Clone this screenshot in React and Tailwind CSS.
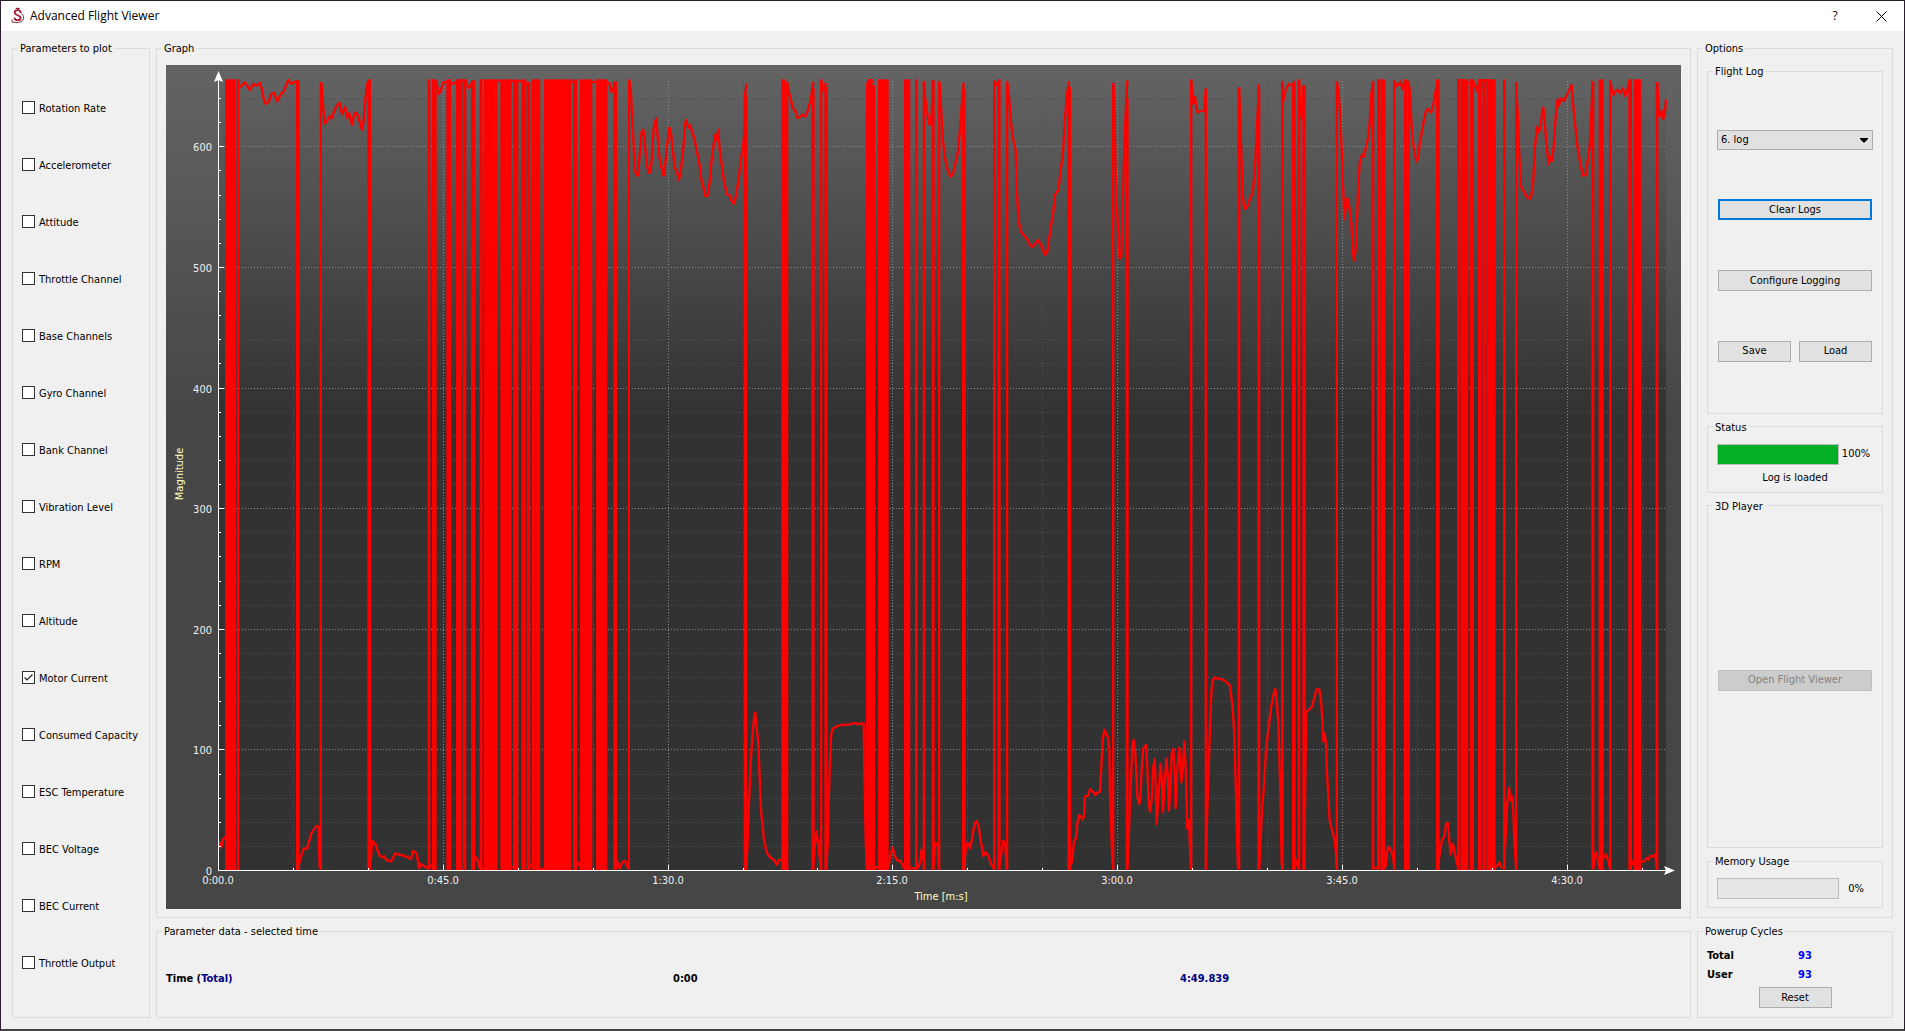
import React, { useState } from "react";

const PARAMETERS = [
  "Rotation Rate",
  "Accelerometer",
  "Attitude",
  "Throttle Channel",
  "Base Channels",
  "Gyro Channel",
  "Bank Channel",
  "Vibration Level",
  "RPM",
  "Altitude",
  "Motor Current",
  "Consumed Capacity",
  "ESC Temperature",
  "BEC Voltage",
  "BEC Current",
  "Throttle Output",
];

const X_AXIS = 218;
const Y_AXIS = 870;
const PLOT_RIGHT = 1666;
const PLOT_TOP = 80;
const yOf = (value) => Math.round(Y_AXIS - value * 1.2062);
const xOf = (step) => Math.round(X_AXIS + step * 74.93);

const Y_STEPS = Array.from({ length: 32 }, (_, i) => (i + 1) * 20);
const X_STEPS = Array.from({ length: 19 }, (_, i) => i + 1);
const X_LABELS = ["0:00.0", "0:45.0", "1:30.0", "2:15.0", "3:00.0", "3:45.0", "4:30.0"];

const SLICES = [
  {
    x: 210,
    spikes: [
      [45, 79], [81, 88], [258, 269, 61], [329, 336, 66], [472, 483], [653, 661], [666, 680],
      [709, 723], [738, 757], [759, 769], [783, 795, 61], [809, 818], [822, 857], [858, 863],
      [871, 905], [909, 925], [934, 949], [951, 961, 66], [965, 976], [977, 991], [1002, 1084],
      [1089, 1101], [1110, 1147], [1158, 1192], [1210, 1221, 64], [1254, 1260],
    ],
    high: [
      "84,60 86,78 93,80 104,67 110,75 120,90 130,72 140,77 150,69 155,85 163,125 168,132 177,124 184,102 193,99 201,124 207,114 214,101 221,95 228,76 235,60 243,71 252,66 264,66",
      "334,66 337,110 341,160 345,190 353,180 360,168 365,175 370,160 377,143 388,128 396,163 405,140 411,175 418,160 426,195 431,170 437,157 443,165 449,185 456,210 460,190 465,130 471,75 476,61",
      "678,62 684,90 686,102 692,95 700,67 710,66 716,61",
      "721,70 730,71 741,66 755,61 767,62 770,75 777,84 782,75 788,64",
      "855,63 875,63",
      "903,63 940,63",
      "947,66 954,80 957,68",
      "970,63 982,63",
      "1082,66 1096,66",
      "1145,66 1162,66",
      "1190,66 1199,72 1204,95 1209,92 1214,68",
    ],
    low: [
      "27,568 29,547 35,560 38,540 46,530",
      "264,628 270,600 276,580 281,565 291,567 297,545 304,520 312,507 321,497 326,502 329,625",
      "478,625 483,590 487,543 497,553 504,575 510,588 517,592 523,588 529,600 544,604 556,580 568,584 585,588 603,597 609,573 620,580 625,610 628,625 632,612 645,620 655,625 665,615",
      "788,625 792,590 799,592 804,605 808,622 822,625",
      "905,622 912,622",
      "957,625 963,612",
      "989,627 1004,627",
      "1095,625 1101,605 1106,612 1110,622",
      "1216,625 1220,600 1226,620 1230,625 1236,608 1245,602 1250,615 1256,627",
    ],
  },
  {
    x: 620,
    spikes: [
      [372, 382, 105], [484, 496], [497, 505, 64], [574, 584, 84], [600, 607], [613, 623, 80],
      [738, 765, 75], [744, 758], [774, 806], [852, 871], [885, 893], [908, 916, 64],
      [935, 944, 61], [954, 961, 64], [1026, 1037, 86], [1119, 1127, 61], [1132, 1142],
      [1158, 1165, 64], [1342, 1353, 80], [1476, 1483, 70], [1517, 1526, 115],
    ],
    high: [
      "28,60 33,98 36,165 40,235 44,330 48,340 53,348 57,310 61,260 65,215 70,209 75,250 80,310 86,338 91,338 96,290 100,215 104,187 109,175 112,220 118,290 124,320 131,347 136,310 142,250 148,202 153,220 158,265 164,325 170,332 177,360 184,320 190,265 195,190 199,180 205,203 211,197 218,220 224,242 230,270 238,310 244,360 251,385 255,407 262,408 268,375 276,290 285,225 290,240 295,210 299,270 306,320 313,370 321,402 330,408 337,428 343,430 350,395 358,340 363,295 369,260 373,220 375,105 380,70",
      "500,65 505,90 512,115 517,140 527,155 532,174 540,171 548,164 556,170 564,150 573,115 580,66",
      "604,60 607,90 611,92 618,68",
      "740,75 746,61 755,61 762,66",
      "911,65 915,110 921,155 927,193 933,193 937,120 939,62",
      "958,65 963,140 968,235 974,290 983,330 991,350 998,345 1006,310 1014,275 1019,220 1024,150 1031,68",
      "1122,64 1128,75 1137,62",
      "1161,65 1167,110 1173,190 1180,240 1187,270 1190,380 1193,440 1196,485 1203,515 1212,527 1220,535 1230,555 1237,561 1246,552 1253,540 1262,552 1269,570 1275,585 1282,575 1287,540 1294,490 1300,455 1305,405 1315,390 1321,340 1329,280 1334,190 1340,110 1347,64",
      "1480,70 1483,130 1487,340 1491,440 1496,560 1499,597 1504,590 1507,480 1512,300 1517,160 1522,62",
    ],
    low: [],
  },
  {
    x: 700,
    spikes: [],
    high: [],
    low: [
      "138,625 142,570 147,430 152,310 157,230 162,175 166,157 169,200 174,240 177,300 180,380 183,450 188,500 192,540 197,565 203,582 212,594 223,600 230,615 237,600 244,600",
      "340,608 344,560 349,515 353,540 358,580 362,620",
      "378,622 383,560 386,430 390,300 394,220 398,206 408,200 423,195 448,193 460,189 475,192 491,190 492,250 494,370 497,540 500,625",
      "525,622 535,622",
      "565,625 570,590 578,563 585,590 592,602 601,602 612,625",
      "627,622 645,627 655,622 661,605 664,570 668,600",
      "700,618 703,590 706,548 713,552 716,620",
      "792,625 796,580 801,550 805,550 811,565 818,525 824,490 830,483 836,500 842,540 850,588 857,576 866,590 873,610 881,625",
      "896,625 904,580 910,542 916,560 920,625",
    ],
  },
  {
    x: 1000,
    spikes: [
      [570, 577], [614, 621, 86], [713, 721, 82], [772, 781, 86], [843, 851, 64], [876, 887, 70],
      [893, 901], [907, 917, 76],
    ],
    high: [
      "573,60 576,90 580,130 585,110 589,145 593,157 603,153 613,152 618,86",
      "717,82 721,200 725,310 728,400 732,440 736,447 744,435 752,410 758,400 764,340 768,260 773,160 777,73",
      "847,65 850,122 857,90 866,72 880,76 883,62",
      "897,62 901,150 907,180 909,110 912,76",
    ],
    low: [],
  },
  {
    x: 1040,
    spikes: [],
    high: [],
    low: [
      "87,625 96,605 102,545 108,535 112,490 118,465 128,478 132,470 135,410 144,407 150,387 159,395 167,405 173,397 180,395 184,320 188,240 193,209 204,232 208,270 210,400 213,480 216,580 219,620",
      "260,620 264,590 268,480 272,380 277,265 281,240 286,280 289,340 292,410 298,432 302,400 306,310 310,266 318,255 322,320 326,425 330,455 335,420 340,320 344,298 347,370 350,492 355,420 361,312 365,350 369,456 374,370 379,296 383,340 387,452 392,370 395,280 400,266 404,330 407,445 411,340 418,263 424,367 429,320 433,245 437,320 440,430 441,505 447,480 452,610",
      "498,605 501,480 506,330 510,200 514,100 518,62 524,52 534,56 546,58 558,65 569,76 573,100 578,145 582,210 585,300 588,400 590,500 594,625",
      "657,625 660,580 666,450 672,380 678,270 685,210 693,145 700,105 706,87 711,130 715,190 718,290 721,400 725,615",
      "762,620 768,600 773,622",
      "791,605 795,440 797,280 799,155 806,150 816,140 824,110 830,88 838,88 843,120 847,180 850,245 854,220 858,250 861,340 865,410 869,480 876,510 884,540 888,580 891,627",
    ],
  },
  {
    x: 1320,
    spikes: [
      [47, 54, 64], [155, 163, 64], [171, 182], [183, 196], [219, 226, 61], [252, 262],
      [263, 270, 64], [348, 359], [411, 419], [421, 445], [450, 462], [474, 487], [488, 499],
      [500, 527], [549, 557], [585, 592, 66], [814, 823, 64], [836, 851], [867, 874, 61],
      [925, 936], [941, 963], [1007, 1015, 66],
    ],
    high: [
      "51,65 57,110 62,190 66,300 70,400 73,478 80,415 85,420 89,450 94,490 98,565 102,602 107,570 111,480 115,370 120,300 127,283 132,290 137,265 144,235 149,190 153,110 159,65",
      "223,62 230,78 237,72 242,65 247,87 254,66 266,66 270,100 274,185 279,245 285,285 290,305 294,295 300,245 306,213 312,180 317,155 324,146 333,158 339,140 345,105 353,61",
      "415,61 430,61",
      "443,70 455,66 462,66 470,93 476,66",
      "480,61 510,61",
      "588,68 594,180 598,290 603,380 612,395 622,413 632,415 638,385 641,340 645,260 651,200 657,217 662,195 666,160 670,143 674,180 678,240 686,313 691,290 696,303 701,260 707,170 713,118 716,138 723,115 732,122 742,103 755,75 759,130 766,200 773,265 781,310 789,347 797,345 803,305 809,260 813,180 818,65",
      "870,62 876,90 881,105 888,92 893,90 900,100 909,85 915,108 922,92 930,62",
      "1011,66 1015,120 1018,170 1026,152 1030,177 1035,155 1038,118",
    ],
    low: [
      "163,623 172,623",
      "197,620 202,575 205,560 213,570 219,590 223,625",
      "354,620 360,575 366,540 373,530 378,490 383,488 387,530 392,583 399,552 404,575 411,610 415,625",
      "527,620 532,618 538,607 545,625",
      "553,600 558,510 562,430 567,383 572,420 577,410 580,460 583,540 588,620",
      "820,625 824,590 828,577 833,595 837,622 842,615 852,590 858,583 864,600 870,625",
      "930,622 935,602 940,615",
      "963,605 972,605 980,594 986,600 990,588 998,590 1006,583 1010,625",
    ],
  },
];

function Group({ title, className, children }) {
  return (
    <fieldset className={`min-w-0 border border-[#dcdcdc] px-[9px] ${className}`}>
      <legend className="-ml-1 px-[2px] pt-[2px] leading-[14px]">{title}</legend>
      {children}
    </fieldset>
  );
}

const PLAIN_FRAME = "border border-[#adadad]";
const DEFAULT_FRAME = "border-2 border-[#0078d7]";

function PushButton({ className = "", isDefault = false, children, ...rest }) {
  return (
    <button
      type="button"
      className={`flex h-[21px] items-center justify-center bg-[#e1e1e1] leading-4 disabled:border-[#bfbfbf] disabled:bg-[#cccccc] disabled:text-[#838383] ${isDefault ? DEFAULT_FRAME : PLAIN_FRAME} ${className}`}
      {...rest}
    >
      {children}
    </button>
  );
}

function Meter({ value, label }) {
  return (
    <div className="flex items-center">
      <div
        role="progressbar"
        aria-label={label}
        aria-valuenow={value}
        aria-valuemin={0}
        aria-valuemax={100}
        className="h-[21px] flex-1 border border-[#bcbcbc] bg-[#e6e6e6]"
      >
        <div className="h-full bg-[#06b025]" style={{ width: `${value}%` }} />
      </div>
      <span className="w-[34px] text-center leading-4">{value}%</span>
    </div>
  );
}

function AppIcon() {
  return (
    <svg width="14" height="18" viewBox="0 0 14 18" fill="none" aria-hidden="true">
      <path d="M9.800 6C9.600 4 8.300 3.200 6.800 3.200C5 3.200 3.700 4.100 3.700 5.600C3.700 8.700 9.600 7.800 9.600 10.900C9.600 12.400 8.400 13.200 6.700 13.200C4.900 13.200 3.700 12.400 3.400 10.600" stroke="#a51c36" strokeWidth="1.800" />
      <path d="M6.700 0.500V3M4.700 1.500H8.700" stroke="#8d2438" strokeWidth="1" />
      <path d="M10.500 6.500C12.500 8 13.200 10.500 12 13C10.800 15 8.500 15.600 5 15.400L1 15.200C0.600 14 1 13 2 12.600" stroke="#7d2f40" strokeWidth="1" />
    </svg>
  );
}

function Grid() {
  return (
    <g shapeRendering="crispEdges" strokeWidth="1" strokeDasharray="1 2">
      {Y_STEPS.map((v) => (
        <line key={v} x1={X_AXIS} x2={PLOT_RIGHT} y1={yOf(v) + 0.5} y2={yOf(v) + 0.5} stroke={v % 100 ? "#505050" : "#8c8c8c"} />
      ))}
      {X_STEPS.map((s) => (
        <line key={s} x1={xOf(s) + 0.5} x2={xOf(s) + 0.5} y1={PLOT_TOP + 1} y2={Y_AXIS} stroke={s % 3 ? "#505050" : "#8c8c8c"} />
      ))}
    </g>
  );
}

function Axes() {
  return (
    <>
      <g shapeRendering="crispEdges" fill="#ffffff">
        <rect x={X_AXIS} y={PLOT_TOP} width="1" height={Y_AXIS - PLOT_TOP + 1} />
        <rect x={X_AXIS} y={Y_AXIS} width={PLOT_RIGHT - X_AXIS} height="1" />
        {Y_STEPS.map((v) => (
          <rect key={v} x={X_AXIS} y={yOf(v)} width={v % 100 ? 3 : 6} height="1" />
        ))}
        {X_STEPS.map((s) => (
          <rect key={s} x={xOf(s)} y={Y_AXIS - (s % 3 ? 2 : 5)} width="1" height={s % 3 ? 2 : 5} />
        ))}
      </g>
      <path d="M218.500 71L223 82L218.500 80L214 82Z" fill="#ffffff" />
      <path d="M1675 870.500L1664 875L1666 870.500L1664 866Z" fill="#ffffff" />
    </>
  );
}

function Trace() {
  return (
    <g fill="none" stroke="#ff0000" strokeWidth="7" strokeLinejoin="round">
      {SLICES.map((slice) => (
        <g key={slice.x}>
          <g transform={`translate(${slice.x} 60) scale(0.33333)`}>
            {slice.spikes.map(([from, to, top = 58]) => (
              <rect key={from} x={from} y={top} width={to - from} height={2430 - top} fill="#ff0000" stroke="none" />
            ))}
            {slice.high.map((points) => (
              <polyline key={points} points={points} />
            ))}
          </g>
          <g transform={`translate(${slice.x} 660) scale(0.33333)`}>
            {slice.low.map((points) => (
              <polyline key={points} points={points} />
            ))}
          </g>
        </g>
      ))}
    </g>
  );
}

function Chart() {
  return (
    <div className="flex min-h-0 flex-1 bg-[linear-gradient(#646464,#464646_350px)]">
      <svg viewBox="166 65 1515 844" className="min-h-0 w-full flex-1" role="img" aria-label="Motor current over time">
        <defs>
          <linearGradient id="plot" gradientUnits="userSpaceOnUse" x1="0" y1="65" x2="0" y2="415">
            <stop offset="0" stopColor="#646464" />
            <stop offset="1" stopColor="#323232" />
          </linearGradient>
        </defs>
        <rect x={X_AXIS} y={PLOT_TOP} width={PLOT_RIGHT - X_AXIS} height={Y_AXIS - PLOT_TOP} fill="url(#plot)" />
        <Grid />
        <Trace />
        <Axes />
        <g fill="#f0f0f0" fontSize="11">
          {[0, 100, 200, 300, 400, 500, 600].map((v) => (
            <text key={v} x="212" y={yOf(v) + 5} textAnchor="end">{v}</text>
          ))}
          {X_LABELS.map((label, i) => (
            <text key={label} x={xOf(i * 3)} y="884" textAnchor="middle">{label}</text>
          ))}
        </g>
        <g fill="#ffffbe" fontSize="11" textAnchor="middle">
          <text x="941" y="900">Time [m:s]</text>
          <text transform="translate(183 474) rotate(-90)">Magnitude</text>
        </g>
      </svg>
    </div>
  );
}

function ParameterBox({ name, checked, onToggle }) {
  return (
    <label className="flex flex-1 items-center gap-1">
      <span className="relative flex size-[13px]">
        <input
          type="checkbox"
          checked={checked}
          onChange={onToggle}
          className="size-[13px] appearance-none border border-[#333333] bg-white"
        />
        {checked && (
          <svg viewBox="0 0 13 13" className="pointer-events-none absolute inset-0 size-[13px]" fill="none" aria-hidden="true">
            <path d="M2.500 6.500L5 9L10.500 3.500" stroke="#222222" strokeWidth="1.200" />
          </svg>
        )}
      </span>
      <span className="whitespace-nowrap pt-[2px] leading-[14px]">{name}</span>
    </label>
  );
}

export default function App() {
  const [selected, setSelected] = useState(["Motor Current"]);
  const toggle = (name) =>
    setSelected((now) => (now.includes(name) ? now.filter((n) => n !== name) : [...now, name]));

  return (
    <div className="flex h-screen min-h-[760px] flex-col border border-b-2 border-[#2a1d2c] border-b-[#444444] bg-[#f0f0f0] font-['DejaVu_Sans_Condensed','DejaVu_Sans',sans-serif] text-[11px] text-black">
      <header className="flex h-[30px] items-center bg-white pl-[10px] font-['Open_Sans',sans-serif] text-xs">
        <AppIcon />
        <h1 className="ml-[5px] flex-1 leading-4">Advanced Flight Viewer</h1>
        <button type="button" aria-label="Help" className="h-full w-[46px]">?</button>
        <button type="button" aria-label="Close" className="flex h-full w-[46px] items-center justify-center">
          <svg width="11" height="11" viewBox="0 0 11 11" fill="none" aria-hidden="true">
            <path d="M0.500 0.500L10.500 10.500M10.500 0.500L0.500 10.500" stroke="#000000" strokeWidth="1" />
          </svg>
        </button>
      </header>

      <main className="flex min-h-0 flex-1 gap-[6px] px-[11px] pt-[9px] pb-[11px]">
        <Group title="Parameters to plot" className="flex w-[138px] flex-col pt-[23px] pb-[26px]">
          {PARAMETERS.map((name) => (
            <ParameterBox key={name} name={name} checked={selected.includes(name)} onToggle={() => toggle(name)} />
          ))}
        </Group>

        <div className="flex min-w-0 flex-1 flex-col gap-[5px]">
          <Group title="Graph" className="flex min-h-0 flex-1 flex-col pt-[9px] pb-2">
            <Chart />
          </Group>
          <Group title="Parameter data - selected time" className="h-[95px] pt-8">
            <div className="grid grid-cols-3 gap-[6px] font-bold leading-4">
              <span>
                Time (<span className="text-[#000080]">Total)</span>
              </span>
              <span>0:00</span>
              <span className="text-[#000080]">4:49.839</span>
            </div>
          </Group>
        </div>

        <div className="flex w-[196px] flex-col gap-[5px]">
          <Group title="Options" className="flex min-h-0 flex-1 flex-col gap-[5px] pt-[7px] pb-[9px]">
            <Group title="Flight Log" className="flex flex-1 flex-col justify-around py-[26px]">
              <div className="relative flex">
                <select aria-label="Flight log" className="h-5 w-full appearance-none border border-[#adadad] bg-[#e1e1e1] px-[3px] leading-4">
                  <option>6. log</option>
                </select>
                <svg width="8" height="5" viewBox="0 0 8 5" className="pointer-events-none absolute top-2 right-[5px]" aria-hidden="true">
                  <path d="M0 0H8V1L4.500 4.500H3.500L0 1Z" fill="#000000" />
                </svg>
              </div>
              <PushButton className="mx-px" isDefault>Clear Logs</PushButton>
              <PushButton className="mx-px">Configure Logging</PushButton>
              <div className="mx-px flex gap-2">
                <PushButton className="flex-1">Save</PushButton>
                <PushButton className="flex-1">Load</PushButton>
              </div>
            </Group>
            <Group title="Status" className="h-[74px] pt-[9px]">
              <Meter value={100} label="Log loading progress" />
              <p className="mt-[5px] text-center leading-4">Log is loaded</p>
            </Group>
            <Group title="3D Player" className="flex flex-1 flex-col justify-center py-[26px]">
              <PushButton className="mx-px" disabled>Open Flight Viewer</PushButton>
            </Group>
            <Group title="Memory Usage" className="h-[55px] pt-[9px]">
              <Meter value={0} label="Memory usage" />
            </Group>
          </Group>
          <Group title="Powerup Cycles" className="h-[95px] pt-[7px]">
            <dl className="grid grid-cols-2 gap-x-[6px] font-bold leading-[19px]">
              <dt>Total</dt>
              <dd className="text-[#0000ff]">93</dd>
              <dt>User</dt>
              <dd className="text-[#0000ff]">93</dd>
            </dl>
            <PushButton className="mx-auto mt-[3px] w-[73px]">Reset</PushButton>
          </Group>
        </div>
      </main>
    </div>
  );
}
